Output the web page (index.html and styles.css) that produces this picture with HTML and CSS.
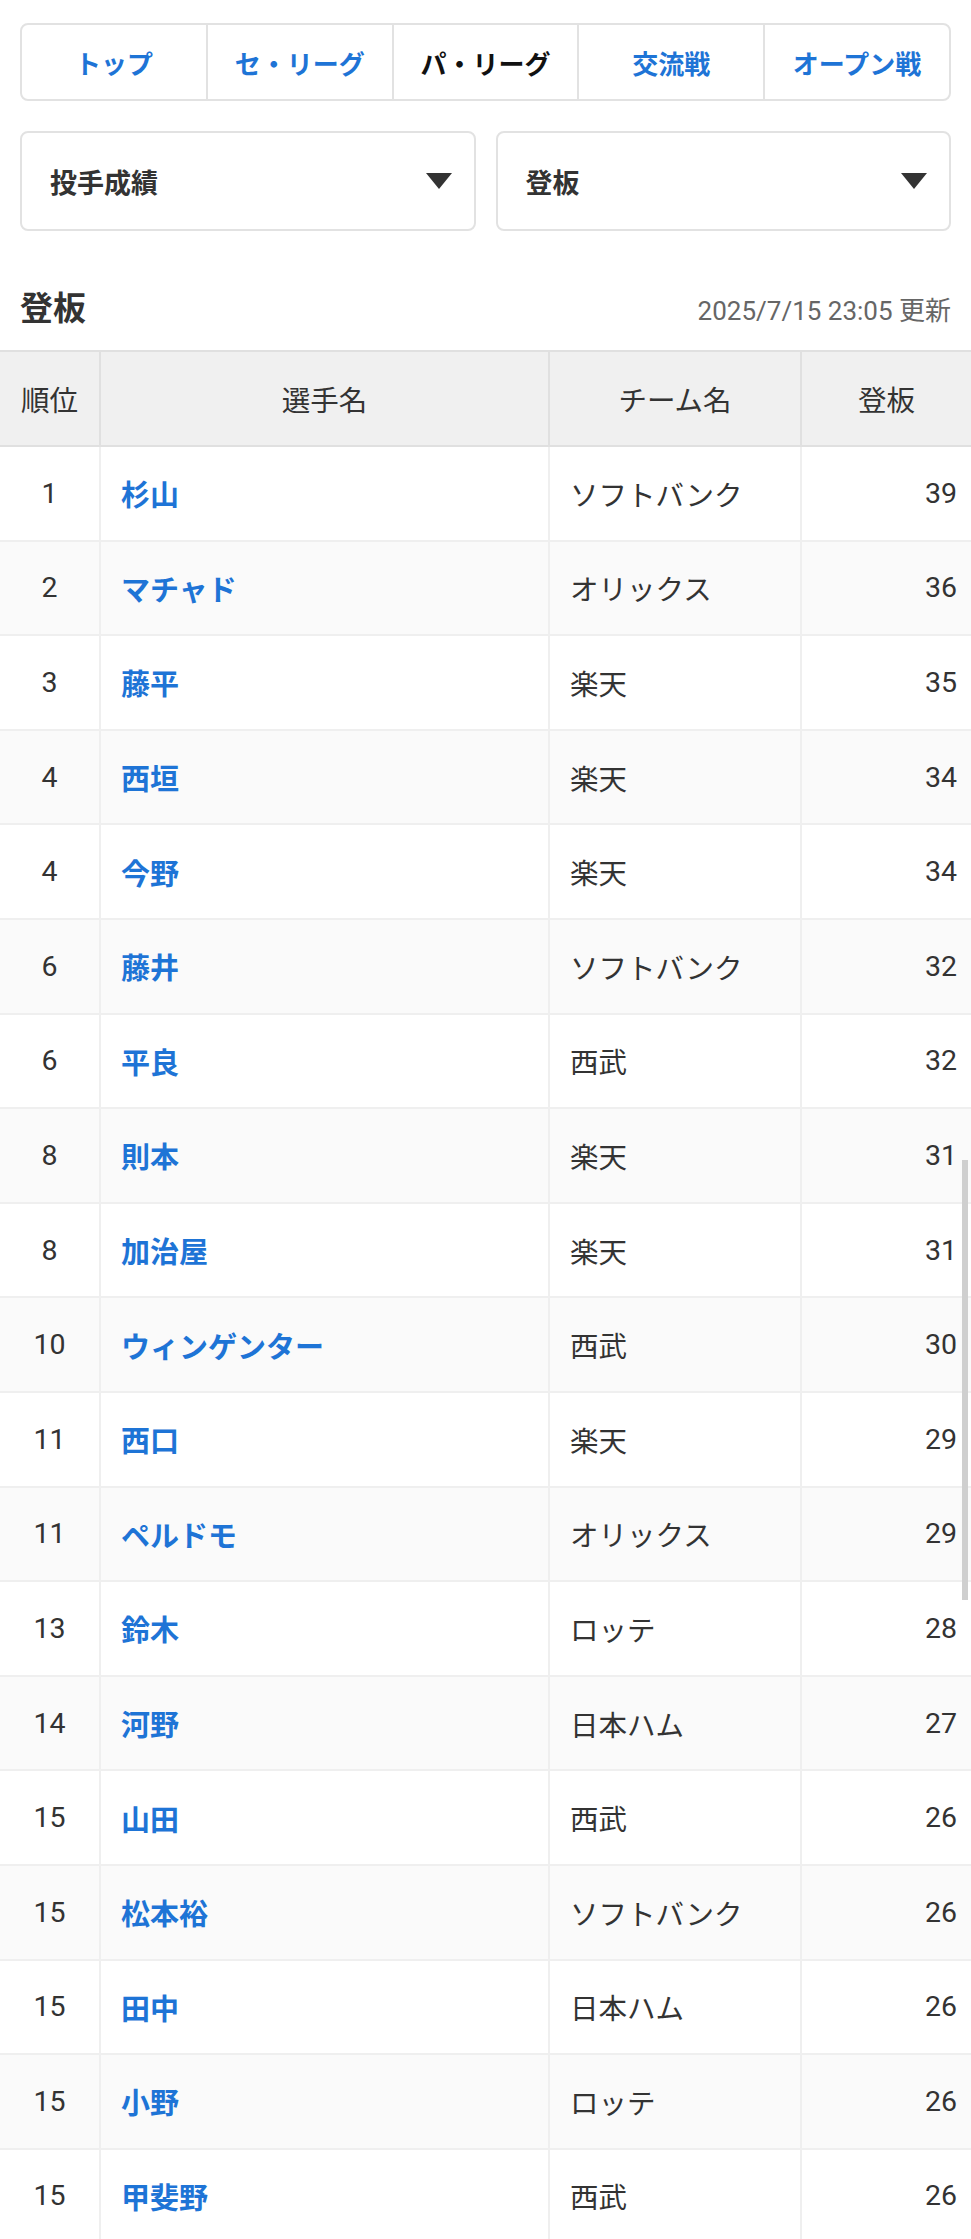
FILE: index.html
```html
<!DOCTYPE html>
<html lang="ja">
<head>
    <meta charset="UTF-8">
    <meta name="viewport" content="width=device-width, initial-scale=1.0">
    <title>パ・リーグ 投手成績 登板</title>
    <link rel="stylesheet" href="styles.css">
</head>
<body>
    <div class="wrap">
        <nav class="tabs">
            <a class="tab">トップ</a>
            <a class="tab">セ・リーグ</a>
            <a class="tab active">パ・リーグ</a>
            <a class="tab">交流戦</a>
            <a class="tab">オープン戦</a>
        </nav>
        <div class="selects">
            <div class="select">
                <span>投手成績</span>
                <span class="arrow"></span>
            </div>
            <div class="select">
                <span>登板</span>
                <span class="arrow"></span>
            </div>
        </div>
        <div class="stats-head">
            <h2>登板</h2>
            <p class="updated">2025/7/15 23:05 更新</p>
        </div>
    </div>
    <table class="ranking">
        <colgroup>
            <col class="c-rank">
            <col class="c-name">
            <col class="c-team">
            <col class="c-num">
        </colgroup>
        <thead>
            <tr>
                <th>順位</th>
                <th>選手名</th>
                <th>チーム名</th>
                <th>登板</th>
            </tr>
        </thead>
        <tbody>
            <tr><td class="rank">1</td><td class="name"><a>杉山</a></td><td class="team">ソフトバンク</td><td class="num">39</td></tr>
            <tr><td class="rank">2</td><td class="name"><a>マチャド</a></td><td class="team">オリックス</td><td class="num">36</td></tr>
            <tr><td class="rank">3</td><td class="name"><a>藤平</a></td><td class="team">楽天</td><td class="num">35</td></tr>
            <tr><td class="rank">4</td><td class="name"><a>西垣</a></td><td class="team">楽天</td><td class="num">34</td></tr>
            <tr><td class="rank">4</td><td class="name"><a>今野</a></td><td class="team">楽天</td><td class="num">34</td></tr>
            <tr><td class="rank">6</td><td class="name"><a>藤井</a></td><td class="team">ソフトバンク</td><td class="num">32</td></tr>
            <tr><td class="rank">6</td><td class="name"><a>平良</a></td><td class="team">西武</td><td class="num">32</td></tr>
            <tr><td class="rank">8</td><td class="name"><a>則本</a></td><td class="team">楽天</td><td class="num">31</td></tr>
            <tr><td class="rank">8</td><td class="name"><a>加治屋</a></td><td class="team">楽天</td><td class="num">31</td></tr>
            <tr><td class="rank">10</td><td class="name"><a>ウィンゲンター</a></td><td class="team">西武</td><td class="num">30</td></tr>
            <tr><td class="rank">11</td><td class="name"><a>西口</a></td><td class="team">楽天</td><td class="num">29</td></tr>
            <tr><td class="rank">11</td><td class="name"><a>ペルドモ</a></td><td class="team">オリックス</td><td class="num">29</td></tr>
            <tr><td class="rank">13</td><td class="name"><a>鈴木</a></td><td class="team">ロッテ</td><td class="num">28</td></tr>
            <tr><td class="rank">14</td><td class="name"><a>河野</a></td><td class="team">日本ハム</td><td class="num">27</td></tr>
            <tr><td class="rank">15</td><td class="name"><a>山田</a></td><td class="team">西武</td><td class="num">26</td></tr>
            <tr><td class="rank">15</td><td class="name"><a>松本裕</a></td><td class="team">ソフトバンク</td><td class="num">26</td></tr>
            <tr><td class="rank">15</td><td class="name"><a>田中</a></td><td class="team">日本ハム</td><td class="num">26</td></tr>
            <tr><td class="rank">15</td><td class="name"><a>小野</a></td><td class="team">ロッテ</td><td class="num">26</td></tr>
            <tr><td class="rank">15</td><td class="name"><a>甲斐野</a></td><td class="team">西武</td><td class="num">26</td></tr>
        </tbody>
    </table>
    <div class="scroll-thumb"></div>
</body>
</html>
```

FILE: styles.css
```css
body
{
    margin: 0;
    font-family: Roboto, "Noto Sans CJK JP", sans-serif;
    color: #333;
    background: #fff;
}
.wrap
{
    padding: 23px 20px 0;
}
.tabs
{
    display: flex;
    height: 78px;
    border: 2px solid #e2e2e2;
    border-radius: 8px;
    box-sizing: border-box;
    overflow: hidden;
}
.tab
{
    flex: 1;
    display: flex;
    align-items: center;
    justify-content: center;
    font-size: 26px;
    font-weight: 700;
    color: #1e74d6;
    border-left: 2px solid #e2e2e2;
}
.tab:first-child
{
    border-left: 0;
}
.tab.active
{
    color: #111;
}
.selects
{
    display: flex;
    gap: 20px;
    margin-top: 30px;
}
.select
{
    flex: 1;
    height: 100px;
    box-sizing: border-box;
    border: 2px solid #e2e2e2;
    border-radius: 8px;
    display: flex;
    align-items: center;
    justify-content: space-between;
    padding: 0 22px 0 28px;
    font-size: 27px;
    font-weight: 700;
    color: #333;
}
.arrow
{
    width: 0;
    height: 0;
    border-left: 13px solid transparent;
    border-right: 13px solid transparent;
    border-top: 16px solid #333;
}
.stats-head
{
    display: flex;
    justify-content: space-between;
    align-items: baseline;
    padding-top: 57px;
    margin-bottom: 20px;
}
.stats-head h2
{
    margin: 0;
    font-size: 33px;
    line-height: 42px;
    font-weight: 700;
    color: #333;
}
.updated
{
    margin: 0;
    font-size: 26px;
    color: #666;
}
.ranking
{
    width: 100%;
    border-collapse: collapse;
    table-layout: fixed;
    font-size: 28.5px;
}
.c-rank
{
    width: 100px;
}
.c-name
{
    width: 449px;
}
.c-team
{
    width: 252px;
}
.c-num
{
    width: 170px;
}
.ranking th
{
    height: 91px;
    background: #f0f0f0;
    font-weight: 400;
    color: #333;
    border: 2px solid #e0e0e0;
}
.ranking th:first-child, .ranking td:first-child
{
    border-left: 0;
}
.ranking th:last-child, .ranking td:last-child
{
    border-right: 0;
}
.ranking td
{
    height: 92.6px;
    border: 2px solid #efefef;
    padding: 0 20px;
}
.ranking tbody tr:nth-child(even)
{
    background: #fafafa;
}
.ranking td.rank
{
    text-align: center;
    padding: 0;
}
.ranking td.name a
{
    color: #1e74d6;
    font-weight: 700;
    font-size: 29px;
}
.ranking td.num
{
    text-align: right;
    padding-right: 14px;
}
.scroll-thumb
{
    position: fixed;
    right: 3px;
    top: 1160px;
    width: 6px;
    height: 440px;
    background: #cfcfcf;
}
```
